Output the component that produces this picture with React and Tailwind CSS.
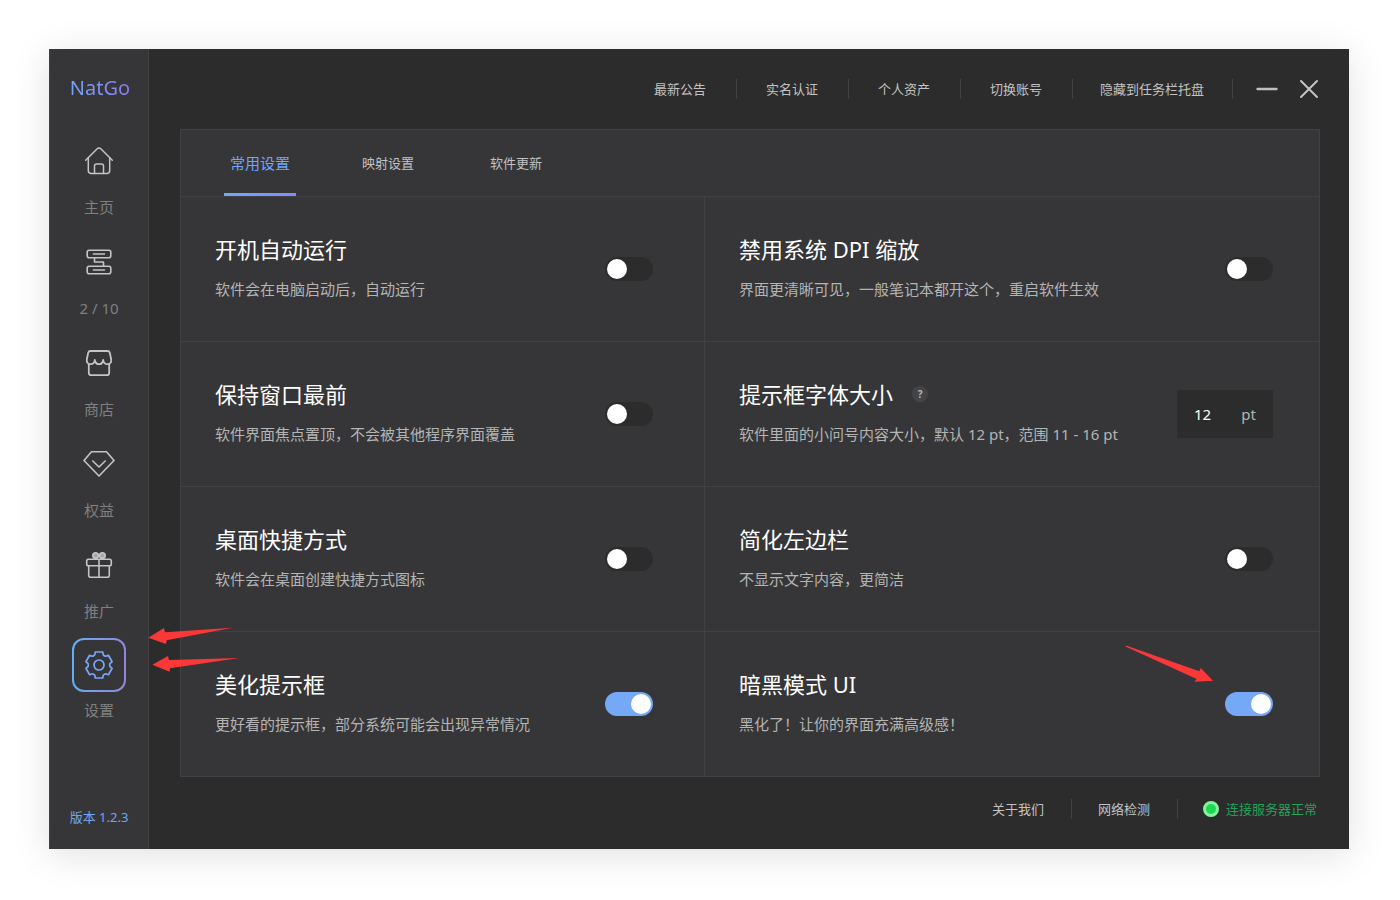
import React, { useState } from 'react';
import clsx from 'clsx';

function HomeIcon() {
  return (
    <svg width="32" height="32" viewBox="0 0 32 32" fill="none" stroke="currentColor" strokeWidth="1.5" strokeLinecap="round" strokeLinejoin="round">
      <path d="M2.7 15.2 14.2 3.8q1.8-1.600 3.600 0l11.500 11.400" />
      <path d="M5.300 13V25.500q0 3 3 3h15.400q3 0 3-3V13" />
      <path d="M11.500 28.500v-7.500q0-2 2-2h5q2 0 2 2v7.500" />
    </svg>
  );
}

function TunnelIcon() {
  return (
    <svg width="32" height="32" viewBox="0 0 32 32" fill="none" stroke="currentColor" strokeWidth="1.6" strokeLinecap="round" strokeLinejoin="round">
      <rect x="4.2" y="4.2" width="23.6" height="7.6" rx="2" />
      <rect x="4.2" y="20.2" width="23.6" height="7.6" rx="2" />
      <path d="M10.5 8h11M10.5 24h11M11.5 12v4h9v4" />
    </svg>
  );
}

function ShopIcon() {
  return (
    <svg width="32" height="32" viewBox="0 0 32 32" fill="none" stroke="currentColor" strokeWidth="1.8" strokeLinecap="round" strokeLinejoin="round">
      <path d="M7.5 4h17q1.8 0 2.3 1.8l1.4 6.7c.5 3-1.5 4.7-3.7 4.7-2.4 0-4-1.7-4.3-4.2-.4 2.5-2 4.2-4.2 4.2s-3.8-1.7-4.2-4.2c-.3 2.5-1.900 4.200-4.300 4.200-2.200 0-4.200-1.700-3.700-4.700l1.400-6.700Q5.700 4 7.500 4Z" />
      <path d="M5.800 17v8.700q0 2.500 2.500 2.500h15.400q2.500 0 2.500-2.500V17" />
    </svg>
  );
}

function DiamondIcon() {
  return (
    <svg width="32" height="32" viewBox="0 0 32 32" fill="none" stroke="currentColor" strokeWidth="1.6" strokeLinecap="round" strokeLinejoin="round">
      <path d="M8.500 3.800h15L31 12.500 16 28 1 12.500Z" />
      <path d="m9.800 13 6.200 6 6.200-6" />
    </svg>
  );
}

function GiftIcon() {
  return (
    <svg width="32" height="32" viewBox="0 0 32 32" fill="none" stroke="currentColor" strokeWidth="1.6" strokeLinejoin="round">
      <rect x="3.700" y="10.200" width="24.600" height="6.600" rx="1.800" />
      <path d="M5.700 16.800v9.400q0 2 2 2h16.600q2 0 2-2v-9.400M16 10v18.200" />
      <circle cx="12.600" cy="6.600" r="2.800" fill="currentColor" fillOpacity="0.800" />
      <circle cx="19.400" cy="6.600" r="2.800" fill="currentColor" fillOpacity="0.800" />
    </svg>
  );
}

function GearIcon() {
  return (
    <svg width="32" height="32" viewBox="-16 -16 32 32" fill="none" stroke="#78a6fa" strokeWidth="1.700" strokeLinejoin="round">
      <path d="M-3.700-13H3.700L4.200-10.300Q5.300-8.800 6.820-8.790L9.410-9.700 13.110-3.300 11.020-1.510Q10.300 0 11.020 1.510L13.110 3.300 9.410 9.700 6.820 8.790Q5.300 8.800 4.200 10.300L3.700 13H-3.700L-4.200 10.300Q-5.300 8.800-6.820 8.790L-9.410 9.700-13.110 3.300-11.020 1.510Q-10.300 0-11.020-1.510L-13.110-3.300-9.410-9.700-6.820-8.790Q-5.300-8.800-4.200-10.300Z" />
      <circle r="5" />
    </svg>
  );
}

const NAV = [
  { id: 'home',     label: '主页',   Icon: HomeIcon },
  { id: 'tunnel',   label: '2 / 10', Icon: TunnelIcon },
  { id: 'shop',     label: '商店',   Icon: ShopIcon },
  { id: 'rights',   label: '权益',   Icon: DiamondIcon },
  { id: 'promo',    label: '推广',   Icon: GiftIcon },
  { id: 'settings', label: '设置',   Icon: GearIcon },
];

const TOP_LINKS = ['最新公告', '实名认证', '个人资产', '切换账号', '隐藏到任务栏托盘'];
const TABS = ['常用设置', '映射设置', '软件更新'];

const SETTINGS = [
  { id: 'autorun',  title: '开机自动运行',      desc: '软件会在电脑启动后，自动运行' },
  { id: 'dpi',      title: '禁用系统 DPI 缩放', desc: '界面更清晰可见，一般笔记本都开这个，重启软件生效' },
  { id: 'topmost',  title: '保持窗口最前',      desc: '软件界面焦点置顶，不会被其他程序界面覆盖' },
  { id: 'tipsize',  title: '提示框字体大小',    desc: '软件里面的小问号内容大小，默认 12 pt，范围 11 - 16 pt', size: true },
  { id: 'shortcut', title: '桌面快捷方式',      desc: '软件会在桌面创建快捷方式图标' },
  { id: 'compact',  title: '简化左边栏',        desc: '不显示文字内容，更简洁' },
  { id: 'tips',     title: '美化提示框',        desc: '更好看的提示框，部分系统可能会出现异常情况' },
  { id: 'dark',     title: '暗黑模式 UI',       desc: '黑化了！让你的界面充满高级感！' },
];

function Sidebar() {
  return (
    <aside className="w-[100px] shrink-0 flex flex-col items-center bg-[#363638] border-x border-[#414143]">
      <div className="pt-6 pl-0.5 text-xl leading-[30px] bg-linear-to-r from-[#6fa8fa] to-[#8a7bf0] bg-clip-text text-transparent">NatGo</div>
      <nav className="mt-[30px] flex flex-col gap-[17px]">
        {NAV.map(({ id, label, Icon }) => {
          const active = id === 'settings';
          return (
            <button key={id} className="flex flex-col items-center gap-2 cursor-pointer">
              {active ? (
                <span className="size-[54px] p-[2px] rounded-xl bg-linear-to-r from-[#62aef5] to-[#8f86d8]">
                  <span className="size-full rounded-[10px] bg-[#363638] flex items-center justify-center"><Icon /></span>
                </span>
              ) : (
                <span className="size-14 flex items-center justify-center text-[#c4c4c4]"><Icon /></span>
              )}
              <span className="text-[15px] leading-5 text-[#808080]">{label}</span>
            </button>
          );
        })}
      </nav>
      <div className="mt-auto mb-[22px] text-[13px] leading-5 text-[#70a5f5]">版本 1.2.3</div>
    </aside>
  );
}

function TopBar() {
  return (
    <header className="h-20 flex items-center justify-end pr-[19px]">
      {TOP_LINKS.map(t => (
        <button key={t} className={clsx('h-5 pr-px border-r border-[#414143] text-[13px] leading-[18px] text-[#c2c2c2] cursor-pointer', t.length > 4 ? 'w-40' : 'w-28')}>{t}</button>
      ))}
      <button aria-label="最小化" className="ml-[13px] w-[42px] h-10 flex items-center justify-center cursor-pointer">
        <svg width="22" height="22" viewBox="0 0 22 22" stroke="#c0c0c0" strokeWidth="2.4" strokeLinecap="round"><path d="M1.5 11h19" /></svg>
      </button>
      <button aria-label="关闭" className="w-[42px] h-10 flex items-center justify-center cursor-pointer">
        <svg width="20" height="20" viewBox="0 0 20 20" stroke="#c4c4c4" strokeWidth="2" strokeLinecap="round"><path d="m2 2 16 16M18 2 2 18" /></svg>
      </button>
    </header>
  );
}

function SettingCell({ item, index, on, onToggle }) {
  const left = index % 2 === 0;
  return (
    <div className={clsx('flex items-center justify-between pl-[34px] border-[#414143]',
      left ? 'border-r pr-[51px]' : 'pr-[46px]', index < 6 ? 'h-[145px] border-b' : 'h-36')}>
      <div className="pb-[5px]">
        <div className="flex items-center gap-[19px]">
          <label htmlFor={item.id} className="text-[22px] leading-[30px] text-white">{item.title}</label>
          {item.size && (
            <button aria-label="帮助" className="size-4 rounded-full bg-[#444446] text-[10px] leading-4 font-bold text-[#b8b8b8] cursor-pointer">?</button>
          )}
        </div>
        <p className="mt-[15px] text-[15px] leading-5 text-[#b4b4b4]">{item.desc}</p>
      </div>
      {item.size ? (
        <div className="w-24 h-12 shrink-0 flex items-center justify-between px-[17px] bg-[#2c2c2c]">
          <input id={item.id} type="text" defaultValue="12" className="w-6 bg-transparent text-[15px] leading-5 text-white outline-none" />
          <span className="text-[15px] leading-5 text-[#b4b4b4]">pt</span>
        </div>
      ) : (
        <input id={item.id} type="checkbox" role="switch" checked={on} onChange={onToggle}
          className="appearance-none w-12 h-6 p-0.5 shrink-0 rounded-full flex bg-[#2c2c2c] checked:bg-[#75a9f7] checked:justify-end cursor-pointer before:block before:size-5 before:rounded-full before:bg-white" />
      )}
    </div>
  );
}

function Arrows() {
  return (
    <>
      <svg className="absolute left-[99px] top-[577px] pointer-events-none" width="94" height="48" viewBox="148 626 94 48" fill="#fb3838">
        <path d="M148.3 637.7 164 628l1 4.300 67.700-4.600-66 12.500-.7 3.800Z" />
        <path d="M152.300 664.700 168 656l1 4 70.500-2-69.500 10.300-.3 3.400Z" />
      </svg>
      <svg className="absolute right-[135px] top-[596px] pointer-events-none" width="89" height="38" viewBox="1125 645 89 38" fill="#fb3838">
        <path d="m1213 680.700-12.300-12.700-1.400 3.300-73.300-25.900-.6 1.200 71.300 32.400-2.400 2.700Z" />
      </svg>
    </>
  );
}

export default function App() {
  const [tab, setTab] = useState(0);
  const [on, setOn] = useState({ tips: true, dark: true });

  return (
    <div className="min-h-screen flex pt-[49px] pl-[49px] pr-[51px] pb-[51px] bg-white font-['Noto_Sans','Noto_Sans_CJK_SC',sans-serif]">
      <div className="relative flex-1 flex bg-[#2c2c2c] shadow-[0_6px_36px_rgba(0,0,0,0.12)]">
        <Sidebar />
        <main className="flex-1 flex flex-col">
          <TopBar />

          <section className="ml-[31px] mr-[29px] bg-[#363638] border border-[#414143]">
            {/* Tabs */}
            <div role="tablist" className="h-[67px] pl-[43px] flex gap-14 border-b border-[#414143]">
              {TABS.map((t, i) => (
                <button key={t} role="tab" aria-selected={tab === i} onClick={() => setTab(i)}
                  className={clsx('w-[72px] flex flex-col cursor-pointer', tab === i ? 'text-[15px] text-[#70a5fa]' : 'text-[13px] text-[#c2c2c2]')}>
                  <span className="w-full h-[63px] pt-1 flex items-center justify-center">{t}</span>
                  {tab === i && <span className="w-full h-[3px] bg-linear-to-r from-[#6fa8fa] to-[#7d8dfa]" />}
                </button>
              ))}
            </div>

            {/* Settings */}
            <div className="grid grid-cols-[524fr_614fr]">
              {SETTINGS.map((item, i) => (
                <SettingCell key={item.id} item={item} index={i} on={!!on[item.id]}
                  onToggle={() => setOn(s => ({ ...s, [item.id]: !s[item.id] }))} />
              ))}
            </div>
          </section>

          <footer className="h-16 flex items-center justify-end pr-8 text-[13px] leading-[18px] text-[#c2c2c2]">
            <button className="w-[106px] h-5 pr-px border-r border-[#414143] cursor-pointer">关于我们</button>
            <button className="w-[106px] h-5 pr-px border-r border-[#414143] cursor-pointer">网络检测</button>
            <div className="pl-[25px] flex items-center gap-[7px] text-[#23a35a]">
              <span className="size-4 rounded-full bg-[#1fd655] border-[3px] border-[#86f29b]" />
              连接服务器正常
            </div>
          </footer>
        </main>
        <Arrows />
      </div>
    </div>
  );
}
